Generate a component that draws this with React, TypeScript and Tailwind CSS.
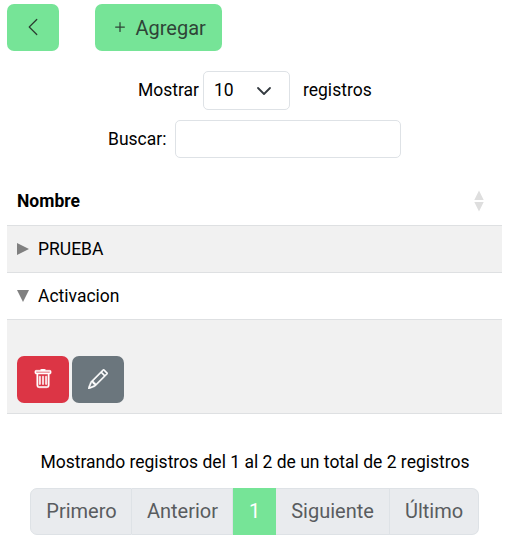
import React from "react";
import { BsChevronLeft, BsPlus, BsTrash, BsPencil } from "react-icons/bs";

const pages = [
  { label: "Primero", cls: "w-[102px] rounded-l-[7px] border-l pl-px" },
  { label: "Anterior", cls: "w-[101px] pl-px" },
  { label: "1", cls: "w-[43px]", active: true },
  { label: "Siguiente", cls: "w-[114px]" },
  { label: "Último", cls: "w-[89px] rounded-r-[7px]" },
];

export default function App() {
  return (
    <div className="h-[549px] w-[507px] overflow-hidden bg-white pl-[7px] pt-1 font-['Roboto',sans-serif] text-[17.5px] leading-[26px] text-black">
      <div className="flex gap-9">
        <button className="flex h-[47px] w-[52px] items-center justify-center rounded-[7px] bg-[#76e497] pb-px text-[#2b3d31]">
          <BsChevronLeft size={20} />
        </button>
        <button className="flex h-[47px] w-[127px] items-center rounded-[7px] bg-[#76e497] pl-[15px] text-[20px] text-[#2f4437]">
          <BsPlus size={20} className="mb-px" />
          <span className="ml-[5.5px]">Agregar</span>
        </button>
      </div>

      <div className="mt-5 flex h-[39px] items-center">
        <span className="w-[196px] pb-px pl-[131px]">Mostrar</span>
        <div className="flex h-[39px] w-[87px] items-center justify-between rounded-[5px] border border-[#dee2e6] pl-[10px] pr-[17px]">
          <span className="pb-px">10</span>
          <svg width="16" height="16" viewBox="0 0 16 16" fill="none" stroke="#343a40" strokeWidth="1.8" strokeLinecap="round" strokeLinejoin="round">
            <path d="m2 5 6 6 6-6" />
          </svg>
        </div>
        <span className="ml-[13px] pb-px">registros</span>
      </div>
      <div className="mt-[10px] flex h-[38px] items-center">
        <label htmlFor="q" className="w-[168px] pb-px pl-[101px]">Buscar:</label>
        <input id="q" className="h-[38px] w-[226px] rounded-[5px] border border-[#dee2e6] bg-white px-3 outline-none" />
      </div>

      <div className="mt-[19px] w-[495px]">
        <div className="flex h-[49px] items-center justify-between border-b border-[#dee0e2] pl-[10px] pr-[18px]">
          <span className="pb-px font-bold">Nombre</span>
          <svg width="10" height="22" viewBox="0 0 10 22" fill="#dedede">
            <path d="M5 0.5 9.7 10H0.3ZM0.3 12H9.7L5 21.5Z" />
          </svg>
        </div>
        <div className="flex h-[47px] items-center border-b border-[#dee0e2] bg-[#f1f1f1] pl-[10px]">
          <svg width="12" height="12" viewBox="0 0 12 12" fill="#808080">
            <path d="M0 0 12 6 0 12Z" />
          </svg>
          <span className="ml-[9px] pb-px">PRUEBA</span>
        </div>
        <div className="flex h-[47px] items-center border-b border-[#dee0e2] pl-[10px]">
          <svg width="12" height="12" viewBox="0 0 12 12" fill="#808080">
            <path d="M0 0H12L6 12Z" />
          </svg>
          <span className="ml-[9px] pb-px">Activacion</span>
        </div>
        <div className="flex h-[94px] items-end gap-[3px] border-b border-[#dee0e2] bg-[#f1f1f1] pb-[10px] pl-[10px]">
          <button className="flex h-[47px] w-[52px] items-center justify-center rounded-[7px] bg-[#dc3545] pb-[2px] text-white">
            <BsTrash size={20} strokeWidth={0.4} />
          </button>
          <button className="flex h-[47px] w-[52px] items-center justify-center rounded-[7px] bg-[#6b767d] pb-[2px] text-white">
            <BsPencil size={20} strokeWidth={0.4} />
          </button>
        </div>
      </div>

      <p className="mt-[35px] h-[26px] whitespace-nowrap pl-[33.5px]">Mostrando registros del 1 al 2 de un total de 2 registros</p>
      <div className="mt-[13px] flex pl-[23px] text-[20px] leading-[27px]">
        {pages.map((p) => (
          <div
            key={p.label}
            className={`flex h-[47px] items-center justify-center ${p.cls} ${
              p.active ? "bg-[#76e497] text-white" : "border-y border-r border-[#dee2e6] bg-[#e9ebee] text-[#595c5f]"
            }`}
          >
            {p.label}
          </div>
        ))}
      </div>
    </div>
  );
}
